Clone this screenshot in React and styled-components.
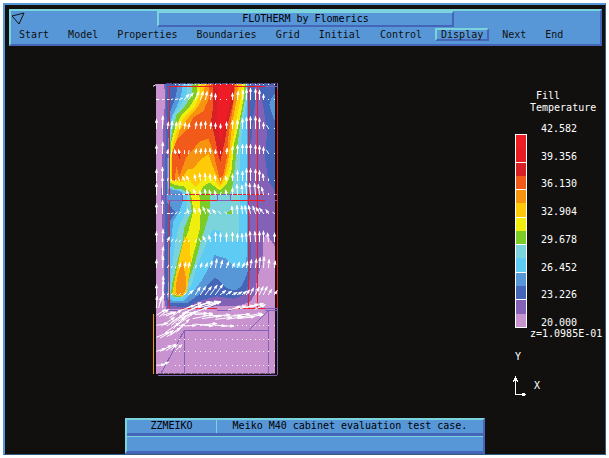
import React from 'react';
import styled, { createGlobalStyle } from 'styled-components';

const colors = {
  ink: '#11100e',
  panel: '#5797d8',
  light: '#7bd3dc',
  shade: '#4565b9',
  purple: '#8261b6',
  pink: '#c993d0',
  sky: '#5ecbf5',
  green: '#7ccb27',
  yellow: '#f0ee0e',
  gold: '#ffcb08',
  orange: '#f7940f',
  deepOrange: '#f15a19',
  darkRed: '#d71f26',
  red: '#ee1c25',
};

const GlobalStyle = createGlobalStyle`
  * { box-sizing: border-box; }
  body {
    margin: 0;
    background: #fff;
    font: 10px/12px "DejaVu Sans Mono", monospace;
  }
`;

const Screen = styled.div`
  display: flex;
  flex-direction: column;
  min-height: calc(100vh - 6px);
  margin: 3px;
  border: 2px solid ${colors.panel};
  border-right: 1px solid #345b80;
  border-bottom: 1px solid #345b80;
  background: ${colors.ink};
`;

const Header = styled.header`
  margin: 4px 3px 0 4px;
  background: ${colors.panel};
  border: 2px solid ${colors.light};
  border-right-color: ${colors.shade};
  border-bottom-color: ${colors.shade};
`;

const TitleRow = styled.div`
  display: grid;
  grid-template-columns: 1fr minmax(0, 297px) 1fr;
`;

const Title = styled.h1`
  margin: 0;
  height: 16px;
  border: 2px solid ${colors.light};
  border-right-color: ${colors.shade};
  border-bottom-color: ${colors.shade};
  font: inherit;
  text-align: center;
  white-space: nowrap;
`;

const Menu = styled.nav`
  display: flex;
  gap: 7px;
  padding: 1px 2px 3px;
`;

// Only the open menu gets the raised edge
const MenuButton = styled.button`
  padding: 0 4px;
  border: 2px solid transparent;
  background: none;
  color: ${colors.ink};
  font: inherit;
  line-height: 9px;
  ${({ $active }) => $active && `
    border-color: ${colors.light} ${colors.shade} ${colors.shade} ${colors.light};
  `}
`;

const Workspace = styled.main`
  display: flex;
  flex: 1;
  justify-content: space-between;
  align-items: flex-start;
  padding-left: 145px;
`;

const Plot = styled.svg`
  flex: none;
  width: 130px;
  height: 300px;
  margin-top: 32px;
`;

const Legend = styled.aside`
  width: 90px;
  padding-top: 44px;
  color: #fff;
  white-space: nowrap;
`;

const LegendTitle = styled.div`
  padding-left: ${({ $indent }) => $indent}px;
`;

const Scale = styled.div`
  display: flex;
  gap: 14px;
  height: 205px;
  margin-top: 9px;
`;

const Bar = styled.div`
  display: flex;
  flex-direction: column;
  width: 12px;
  margin-top: 11px;
  border: 1px solid #fff;
  border-bottom: 0;
`;

const Band = styled.div`
  flex: 1;
  border-bottom: 1px solid #fff;
  background: linear-gradient(${({ $from, $to }) => `${$from} 50%, ${$to} 50%`});
`;

const Values = styled.ul`
  display: flex;
  flex-direction: column;
  justify-content: space-between;
  margin: 0;
  padding: 0;
  list-style: none;
  line-height: 11px;
`;

const Axes = styled.div`
  display: flex;
  align-items: center;
  gap: 7px;
  margin-top: 13px;
`;

const AxisArrows = styled.svg`
  overflow: visible;
`;

const AxisLabel = styled.div`
  margin-top: 11px;
`;

const Footer = styled.footer`
  width: 60%;
  margin: 0 auto;
  background: ${colors.panel};
  border: 2px solid ${colors.light};
  border-right-color: ${colors.shade};
  border-bottom: 3px solid ${colors.shade};
`;

const StatusRow = styled.div`
  display: grid;
  grid-template-columns: 1fr 3fr;
  height: 16px;
  border-bottom: 3px solid ${colors.shade};
  line-height: 11px;
  text-align: center;
  white-space: nowrap;
`;

const StatusCell = styled.div`
  & + & {
    border-left: 1px solid ${colors.light};
  }
`;

const MessageRow = styled.div`
  height: 15px;
  border-top: 1px solid ${colors.light};
`;

const menus = ['Start', 'Model', 'Properties', 'Boundaries', 'Grid', 'Initial', 'Control', 'Display', 'Next', 'End'];

const values = ['42.582', '39.356', '36.130', '32.904', '29.678', '26.452', '23.226', '20.000'];

const bands = [
  [colors.red, '#e71c23'],
  [colors.darkRed, colors.deepOrange],
  [colors.orange, colors.gold],
  [colors.yellow, colors.green],
  [colors.light, colors.sky],
  [colors.panel, colors.shade],
  [colors.purple, colors.pink],
];

// Filled temperature contours, coldest first so that hotter ones lie on top
const contours = [
  [colors.pink, '18,18 375,18 375,888 18,888'],
  [colors.purple, '42,18 375,18 375,506 366,492 350,467 341,480 340,510 335,560 322,600 314,650 300,672 260,684 200,684 140,694 48,692 42,660 42,500 36,432 34,360 36,250 41,130 46,60'],
  [colors.shade, '325,18 375,18 375,341 354,306 345,236 351,166 340,86'],
  [colors.shade, '47,18 316,18 318,60 308,130 300,250 298,400 302,500 304,560 298,610 285,650 250,662 200,655 150,668 110,687 52,684 46,640 46,430 44,300 50,130'],
  [colors.panel, '375,45 365,60 358,80 370,120 375,130'],
  [colors.panel, '84,18 296,18 296,500 294,580 275,625 255,638 230,630 205,604 192,600 180,614 150,648 110,676 60,676 52,660 54,600 56,460 60,430 76,404 62,384 50,372 50,330 52,250 58,130 62,95 76,60'],
  [colors.sky, '98,18 292,18 292,496 288,560 276,571 256,571 226,541 194,531 176,570 152,612 130,640 100,669 68,668 54,655 56,600 62,500 70,430 88,400 98,370 95,342 75,336 54,333 55,250 60,160 65,115 80,85 94,50'],
  [colors.light, '112,18 291,18 290,60 274,180 268,290 273,340 267,400 268,485 252,490 228,488 210,458 186,457 160,520 142,560 125,620 98,660 74,660 60,640 65,580 75,500 85,450 108,400 112,352 90,337 70,335 56,325 57,250 62,150 70,110 90,85 109,50'],
  [colors.green, '128,18 289,18 286,60 270,140 259,230 248,320 240,347 182,349 179,385 175,420 165,450 150,500 135,555 115,610 95,656 72,656 62,648 68,610 80,560 98,490 102,450 125,400 118,347 95,334 72,332 57,320 56,260 60,200 66,160 80,110 105,85 125,50'],
  [colors.green, '246,392 229,406 246,409'],
  [colors.yellow, '143,18 284,18 281,60 268,130 252,200 244,280 232,315 210,337 178,314 160,325 148,350 152,400 150,450 138,500 125,550 110,600 96,652 66,650 72,620 85,560 100,500 115,460 122,430 130,400 122,342 100,325 74,321 60,314 60,250 64,190 72,160 92,115 120,85 141,50'],
  [colors.gold, '152,18 276,18 272,60 258,130 246,200 238,272 228,302 211,327 178,292 155,308 136,328 120,308 96,312 62,308 63,250 70,190 80,160 100,120 135,85 149,50'],
  [colors.gold, '103,478 118,486 123,556 109,646 95,656 66,650 76,596 91,526'],
  [colors.orange, '165,18 266,18 261,60 248,130 240,200 235,245 224,292 211,318 190,270 175,228 150,247 130,272 112,275 92,308 66,305 65,250 75,200 88,160 110,125 145,85 161,50'],
  [colors.orange, '97,546 107,596 107,636 97,652 76,650 80,606'],
  [colors.deepOrange, '178,18 256,18 250,80 236,170 230,240 220,290 211,304 205,288 190,222 175,182 150,190 128,215 108,238 88,296 78,262 75,308 66,306 66,225 78,190 90,175 115,150 130,118 160,100 177,60'],
  [colors.darkRed, '190,18 252,18 250,70 235,130 222,202 211,250 205,232 195,180 183,130 190,80'],
  [colors.darkRed, '82,222 93,222 88,244'],
  [colors.red, '206,18 244,18 238,80 222,150 214,196 207,170 200,120 204,60'],
];

// Edges of the cabinet and of the boards in it, each three units wide
const edges = [
  [colors.red, 'M57 25.5H345M58.5 25V349M58.5 367V690M295.5 25V690M322.5 25V690M382.5 35V690M96 349.5H201M96 367.5H201M243 349.5H345M243 367.5H345M96 691.5H201M243 691.5H345'],
  [colors.purple, 'M48 349.5H96M48 367.5H96M49.5 349V367M97.5 349V367M201 349.5H243M201 367.5H243M202.5 349V367M241.5 349V367M345 349.5H382M345 367.5H382M48 691.5H96M48 697.5H96M201 697.5H243M345 691.5H382M345 697.5H382'],
  [colors.purple, 'M345 25.5H382M382.5 16V35M382.5 690V892M382 892.5H24M355.5 697V888M103.5 888V757M102 757.5H355M103 757L32 888M355 697L297 757'],
  [colors.orange, 'M10.5 708V887'],
];

const columns = [19, 38, 52, 64, 76, 89, 102, 115, 137, 152, 165, 180, 196, 212, 228, 248, 262, 276, 288, 301, 316, 329, 341, 355, 373];

// One entry per grid row: base line, then dx and dy of the vector in each column
const rows = [
  {
    y: 64,
    dx: [8, 6, 6, 5, 8, 10, 14, 14, 10, 8, 5, 4, 0, 0, 0, 0, 2, 2, 0, 0, 0, 0, 0, 0, 0],
    dy: [0, 0, 0, -2, -2, -4, -16, -20, -24, -24, -24, -20, -18, 0, 0, -20, -25, -28, -31, -34, -32, -28, -16, 0, 0],
  },
  {
    y: 150,
    dx: [0, 1, 3, 2, 3, 3, 3, 3, 3, 2, 0, 2, 0, 0, 0, 0, 0, 0, 0, 0, 0, 0, 0, -6, 0],
    dy: [-28, -38, -20, -22, -20, -22, -18, -16, -20, -20, -22, -18, -17, -14, -20, -24, -26, -30, -34, -36, -36, -32, -18, -10, 0],
  },
  {
    y: 226,
    dx: [0, 1, 2, 0, -3, -3, 0, 2, 3, 2, 0, -2, 0, 0, 2, 0, 0, 0, 0, 0, 0, 0, 0, -6, 0],
    dy: [-26, -34, -12, -8, -12, -12, -10, -10, -14, -15, -16, -16, -12, -8, -16, -22, -26, -28, -28, -28, -26, -24, -20, -10, 0],
  },
  {
    y: 308,
    dx: [0, 0, 2, 0, 2, -4, -6, -6, -3, -3, -2, -2, -3, 0, -3, 0, 0, 0, 0, 0, 0, 0, -2, 0, 0],
    dy: [-34, -40, -8, -4, -3, -10, -12, -14, -18, -22, -22, -20, -16, -8, -14, -20, -30, -28, -36, -36, -34, -30, -20, -6, 0],
  },
  {
    y: 348,
    dx: [0, 0, 2, 0, 2, -4, -6, -6, -6, -3, -2, -4, -3, 2, -3, 0, -2, -2, -2, -3, -3, -4, -6, 0, 0],
    dy: [-34, -52, 0, 0, 0, 0, 0, -14, -16, -12, -16, -14, -12, -8, -14, -20, -30, -28, -36, -34, -34, -30, -22, -4, 0],
  },
  {
    y: 407,
    dx: [0, 0, 8, 6, 6, 4, 8, -4, -5, -5, -8, -10, -9, -7, -5, -2, -2, -3, -5, -6, -8, -10, -12, -8, -6],
    dy: [-30, -40, 0, -2, -4, -5, -3, -14, -16, -16, -20, -14, -12, -8, -6, -22, -24, -24, -24, -24, -22, -18, -16, -12, -4],
  },
  {
    y: 491,
    dx: [0, 2, 6, 5, 4, 3, 3, 2, 4, -6, -8, -5, 0, 0, 0, 0, 0, -2, -2, -2, -2, 0, 0, -3, 0],
    dy: [-30, -36, -14, -8, -6, -4, -4, -4, -8, -10, -16, -18, -28, -26, -26, -28, -24, -24, -26, -30, -30, -30, -32, -26, -26],
  },
  {
    y: 568,
    dx: [0, 2, 4, 2, 2, 4, 4, 3, 3, 4, 6, 5, 4, 6, 7, 6, 6, 6, 3, 3, 3, 2, 2, 2, 2],
    dy: [-24, -34, -8, -4, -4, -14, -16, -16, -8, -14, -14, -20, -26, -22, -18, -14, -16, -14, -18, -24, -26, -30, -32, -24, -20],
  },
  {
    y: 650,
    dx: [0, 3, 4, 3, 3, 4, 6, 14, 14, 16, 18, 20, 22, 16, 16, 14, 14, 12, 9, 9, 11, 11, 11, 10, 8],
    dy: [-30, -42, -4, -2, -4, -4, -6, -12, -22, -24, -24, -28, -30, -12, -10, -6, -8, -10, -14, -20, -22, -24, -24, -16, -12],
  },
];

// Inlet jet: x, y, dx, dy
const jet = [
  [19, 690, 2, -36], [26, 690, 8, -34], [38, 690, 2, -50], [30, 676, 10, -26], [36, 540, 4, -34], [38, 640, 2, -46],
  [19, 712, 28, -18], [28, 716, 28, -22], [38, 712, 34, -10], [48, 714, 30, -12], [58, 720, 36, -24],
  [19, 742, 34, -6], [34, 744, 40, -26], [50, 744, 50, -34], [64, 742, 52, -44], [80, 742, 60, -42],
  [19, 778, 38, -16], [30, 780, 40, -22], [50, 776, 42, -26], [62, 772, 40, -34], [78, 764, 40, -40],
  [19, 820, 28, -8], [30, 820, 34, -18], [48, 818, 30, -20], [62, 816, 20, -16], [78, 816, 18, -16],
  [19, 862, 26, -2], [34, 862, 22, -10],
  [84, 700, 50, -18], [96, 706, 60, -24], [104, 714, 70, -26], [110, 690, 44, -16], [122, 694, 58, -24],
  [132, 688, 54, -16], [144, 690, 60, -18], [150, 680, 54, -10], [156, 694, 56, -22], [168, 684, 44, -14], [180, 684, 32, -12],
  [112, 704, 60, 2], [134, 710, 54, -4], [160, 712, 56, 2], [190, 714, 50, -4], [220, 714, 54, 0], [250, 712, 50, -4], [280, 716, 56, -10],
  [128, 722, 60, -12], [156, 722, 52, -8], [196, 724, 50, -6], [230, 724, 52, -8], [262, 722, 52, -6], [290, 718, 50, -8],
  [234, 696, 36, -10], [252, 692, 36, -8], [270, 692, 40, -10], [288, 690, 36, -12], [304, 688, 36, -12], [314, 694, 32, -14],
  [104, 744, 34, -2], [134, 738, 54, 6], [150, 742, 50, -6], [186, 740, 40, 4], [218, 744, 34, 0],
  [62, 734, 46, -30], [70, 752, 36, -36], [84, 730, 46, -26], [92, 720, 50, -20], [48, 762, 40, -28],
];

const dotRows = [18, 743, 784, 820, 862];

// Centre of the plot cell that a coordinate falls in
const snap = (n) => Math.floor(n / 3) * 3 + 1.5;

function vectorPath(x, y, dx, dy) {
  return `M${x} ${y}l${dx} ${dy}`;
}

// Short, thick head, left out where the vector is too small for one
function headPath(x, y, dx, dy) {
  const length = Math.hypot(dx, dy);
  if (length < 12) return '';
  const ux = dx / length;
  const uy = dy / length;
  const tipX = x + dx;
  const tipY = y + dy;
  const baseX = tipX - ux * 11;
  const baseY = tipY - uy * 11;
  return `M${tipX + ux * 2} ${tipY + uy * 2}L${baseX - uy * 5} ${baseY + ux * 5}L${baseX + uy * 5} ${baseY - ux * 5}Z`;
}

const vectors = [
  ...rows.flatMap(({ y, dx, dy }) => columns.map((x, i) => [snap(x), snap(y), dx[i], dy[i]])),
  ...jet,
];

function ContourPlot() {
  return (
    <Plot viewBox="0 0 390 900" role="img" aria-label="Temperature contours" shapeRendering="crispEdges">
      {contours.map(([fill, points], i) => <polygon key={i} fill={fill} points={points} />)}
      <path d="M48 16.5H378" stroke="#51488a" strokeWidth="3" strokeDasharray="18 3" />
      <path d="M24 886.5H375" stroke="#6c5470" strokeWidth="3" strokeDasharray="14 3" />
      {edges.map(([stroke, d], i) => <path key={i} d={d} stroke={stroke} strokeWidth="3" fill="none" />)}
      <g shapeRendering="geometricPrecision">
        <path d={vectors.map((v) => vectorPath(...v)).join('')} stroke="#fff" strokeWidth="3" />
        <path d={vectors.map((v) => headPath(...v)).join('')} fill="#fff" />
        <path d="M9 25L18 20" stroke="#fff" strokeWidth="3" />
      </g>
      {dotRows.map((y) => (
        <path
          key={y}
          d={columns.slice(4).map((x) => `M${snap(x) - 1.5} ${snap(y)}h3`).join('')}
          stroke="#fff"
          strokeWidth="3"
        />
      ))}
      <path
        d={rows.map(({ y }) => columns.map((x) => `M${snap(x) - 1.5} ${snap(y)}h3`).join('')).join('')}
        stroke="#fff"
        strokeWidth="3"
      />
    </Plot>
  );
}

function App() {
  return (
    <>
      <GlobalStyle />
      <Screen>
        <Header>
          <TitleRow>
            <svg width="16" height="15" viewBox="0 0 16 15" fill="none" stroke={colors.ink}>
              <path d="M1 5L13 2L8 13Z" />
            </svg>
            <Title>FLOTHERM by Flomerics</Title>
          </TitleRow>
          <Menu>
            {menus.map((name) => (
              <MenuButton key={name} type="button" $active={name === 'Display'}>{name}</MenuButton>
            ))}
          </Menu>
        </Header>

        <Workspace>
          <ContourPlot />
          <Legend>
            <LegendTitle $indent={21}>Fill</LegendTitle>
            <LegendTitle $indent={15}>Temperature</LegendTitle>
            <Scale>
              <Bar>
                {bands.map(([from, to]) => <Band key={from} $from={from} $to={to} />)}
              </Bar>
              <Values>
                {values.map((value) => <li key={value}>{value}</li>)}
              </Values>
            </Scale>
            <LegendTitle $indent={15}>z=1.0985E-01</LegendTitle>
            <AxisLabel>Y</AxisLabel>
            <Axes>
              <AxisArrows width="12" height="20" viewBox="0 0 12 20" shapeRendering="crispEdges">
                <path d="M0 18h10v1H0zM0 0h1v18H0z" fill="#fff" />
                <path d="M-1 2h3v2h1v2h-1v-1H-1v1H-2V4h1zM7 17h3v3H7zM10 18h1v1h-1z" fill="#fff" />
              </AxisArrows>
              X
            </Axes>
          </Legend>
        </Workspace>

        <Footer>
          <StatusRow>
            <StatusCell>ZZMEIKO</StatusCell>
            <StatusCell>Meiko M40 cabinet evaluation test case.</StatusCell>
          </StatusRow>
          <MessageRow />
        </Footer>
      </Screen>
    </>
  );
}

export default App;
